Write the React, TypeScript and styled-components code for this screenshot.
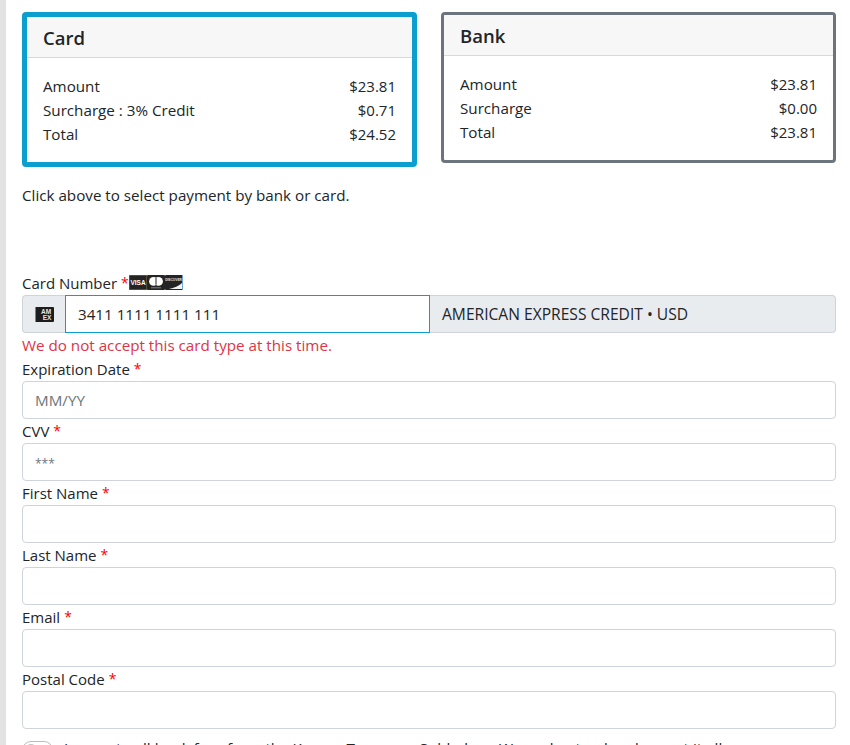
import React from "react";
import styled, { createGlobalStyle } from "styled-components";

const GlobalStyle = createGlobalStyle`
  html, body {
    margin: 0;
    padding: 0;
    height: 745px;
    overflow: hidden;
    background: #fff;
  }
  body {
    font-family: "Open Sans", "Noto Sans", sans-serif;
    font-size: 15.2px;
    color: #212529;
  }
  * { box-sizing: border-box; }
`;

const Page = styled.div`
  height: 745px;
  overflow: hidden;
  border-left: 6px solid #e3e3e3;
  padding: 12px 14px 0 16px;
`;

const CardRow = styled.div`
  display: flex;
  justify-content: space-between;
  align-items: flex-start;
`;

const SummaryCard = styled.div<{ $selected?: boolean }>`
  width: 395px;
  height: ${(p) => (p.$selected ? "155px" : "151px")};
  border: ${(p) => (p.$selected ? "5px solid #0a9fcf" : "3px solid #6c757d")};
  border-radius: 4px;
  overflow: hidden;
`;

const CardHead = styled.div`
  height: 41px;
  padding: 2px 16px 0;
  display: flex;
  align-items: center;
  background: #f7f7f7;
  border-bottom: 1px solid #d9d9d9;
  font-size: 18.5px;
  font-weight: 600;
  line-height: 1;
`;

const CardBody = styled.div`
  padding: 16px 16px 0;
`;

const Line = styled.div`
  display: flex;
  justify-content: space-between;
  line-height: 24px;
`;

const Money = styled.span`
  font-size: 15px;
`;

const Hint = styled.p`
  margin: 16px 0 64px;
  line-height: 24px;
`;

const Label = styled.label`
  display: flex;
  align-items: center;
  height: 24px;
  line-height: 24px;
  font-size: 15px;
`;

const Req = styled.span`
  color: #f00;
  margin-left: 4px;
  font-size: 14px;
`;

const TextInput = styled.input<{ $tinyHint?: boolean }>`
  display: block;
  width: 100%;
  height: 38px;
  padding: 0 12px;
  border: 1px solid #ced4da;
  border-radius: 4px;
  font: inherit;
  color: #212529;
  background: #fff;
  &::placeholder {
    color: #6c757d;
    font-size: ${(p) => (p.$tinyHint ? "12px" : "inherit")};
  }
`;

const CardNumberGroup = styled.div`
  display: flex;
  height: 38px;
`;

const BrandAddon = styled.div`
  width: 43px;
  display: flex;
  align-items: center;
  justify-content: center;
  background: #e9ecef;
  border: 1px solid #ced4da;
  border-right: 0;
  border-radius: 4px 0 0 4px;
`;

const NumberInput = styled.input`
  width: 365px;
  height: 38px;
  padding: 0 12px;
  border: 1px solid #0a9fcf;
  font: inherit;
  color: #212529;
  outline: none;
`;

const TypeAddon = styled.div`
  flex: 1;
  display: flex;
  align-items: center;
  padding: 0 12px;
  background: #e9ecef;
  border: 1px solid #ced4da;
  border-left: 0;
  border-radius: 0 4px 4px 0;
  font-size: 15.6px;
`;

const ErrorText = styled.div`
  color: #dc3545;
  line-height: 24px;
`;

const Logos = styled.span`
  display: inline-flex;
  margin-top: -2px;
`;

const Agree = styled.div`
  display: flex;
  align-items: flex-start;
  gap: 11px;
  margin-top: 7px;
  line-height: 24px;
  white-space: nowrap;
`;

const Toggle = styled.span`
  position: relative;
  width: 31px;
  height: 18px;
  margin-top: 5px;
  border: 1px solid #bdbdbd;
  border-radius: 9px;
  flex: none;
  &::before {
    content: "";
    position: absolute;
    left: 2px;
    top: 2px;
    width: 12px;
    height: 12px;
    border-radius: 50%;
    background: #c4c4c4;
  }
`;

function Visa() {
  return (
    <svg width="18" height="15" viewBox="0 0 18 15">
      <rect width="18" height="15" rx="1" fill="#242424" />
      <rect x="0.5" y="0.5" width="17" height="14" fill="none" stroke="#7a6a3a" strokeWidth="0.6" />
      <text x="9" y="10" fontSize="6.5" fontWeight="700" fill="#fff" textAnchor="middle" fontFamily="Liberation Sans">VISA</text>
    </svg>
  );
}

function Master() {
  return (
    <svg width="18" height="15" viewBox="0 0 18 15">
      <rect width="18" height="15" rx="1" fill="#242424" />
      <circle cx="6.5" cy="6.4" r="4.4" fill="#fff" />
      <circle cx="11.5" cy="6.4" r="4.4" fill="#fff" />
      <path d="M9 3v6.8" stroke="#777" strokeWidth="1.6" />
      <path d="M4 12.8h10" stroke="#9a9a9a" strokeWidth="0.8" />
    </svg>
  );
}

function Discover() {
  return (
    <svg width="18" height="15" viewBox="0 0 18 15">
      <rect width="18" height="15" rx="1" fill="#242424" />
      <text x="8.5" y="6" fontSize="3.2" fontWeight="700" fill="#e4e4e4" textAnchor="middle" fontFamily="Liberation Sans">DISCOVER</text>
      <path d="M4 14 C9 13 14 11 17 8 L17 14 Z" fill="#f2f2f2" />
      <rect x="17" y="0" width="1" height="15" fill="#6aa5d8" />
    </svg>
  );
}

function Amex() {
  return (
    <svg width="19" height="15" viewBox="0 0 19 15">
      <rect width="19" height="15" rx="1" fill="#1d1d1d" />
      <rect width="1" height="15" fill="#b9772a" />
      <text x="11" y="6.5" fontSize="6.5" fontWeight="700" fill="#e6e6e6" textAnchor="middle" fontFamily="Liberation Sans">AM</text>
      <text x="12" y="12.8" fontSize="6.5" fontWeight="700" fill="#e6e6e6" textAnchor="middle" fontFamily="Liberation Sans">EX</text>
    </svg>
  );
}

const fields = [
  { label: "Expiration Date", placeholder: "MM/YY" },
  { label: "CVV", placeholder: "***", tinyHint: true },
  { label: "First Name", placeholder: "" },
  { label: "Last Name", placeholder: "" },
  { label: "Email", placeholder: "" },
  { label: "Postal Code", placeholder: "" },
];

export default function App() {
  return (
    <Page>
      <GlobalStyle />
      <CardRow>
        <SummaryCard $selected>
          <CardHead>Card</CardHead>
          <CardBody>
            <Line><span>Amount</span><Money>$23.81</Money></Line>
            <Line><span>Surcharge : 3% Credit</span><Money>$0.71</Money></Line>
            <Line><span>Total</span><Money>$24.52</Money></Line>
          </CardBody>
        </SummaryCard>
        <SummaryCard>
          <CardHead>Bank</CardHead>
          <CardBody>
            <Line><span>Amount</span><Money>$23.81</Money></Line>
            <Line><span>Surcharge</span><Money>$0.00</Money></Line>
            <Line><span>Total</span><Money>$23.81</Money></Line>
          </CardBody>
        </SummaryCard>
      </CardRow>
      <Hint>Click above to select payment by bank or card.</Hint>
      <Label>
        Card Number <Req>*</Req>
        <Logos><Visa /><Master /><Discover /></Logos>
      </Label>
      <CardNumberGroup>
        <BrandAddon><Amex /></BrandAddon>
        <NumberInput defaultValue="3411 1111 1111 111" />
        <TypeAddon>AMERICAN EXPRESS CREDIT • USD</TypeAddon>
      </CardNumberGroup>
      <ErrorText>We do not accept this card type at this time.</ErrorText>
      {fields.map((f) => (
        <div key={f.label}>
          <Label>{f.label} <Req>*</Req></Label>
          <TextInput placeholder={f.placeholder} $tinyHint={f.tinyHint} />
        </div>
      ))}
      <Agree>
        <Toggle />
        <span>I agree to all bank fees from the Kansas Treasurer Subledger. We understand and accept it all</span>
      </Agree>
    </Page>
  );
}
